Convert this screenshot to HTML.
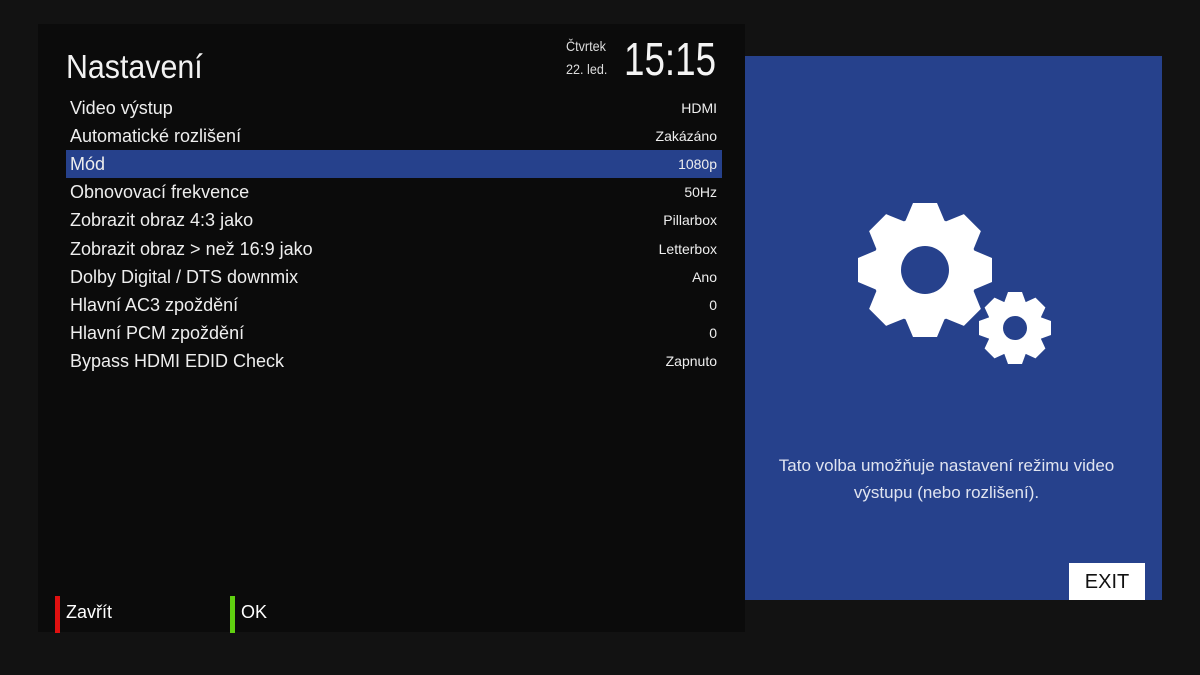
<!DOCTYPE html>
<html><head><meta charset="utf-8"><style>
body{margin:0;width:1200px;height:675px;background:#121212;position:relative;overflow:hidden;font-family:"Liberation Sans",sans-serif;color:#fff}
.panel{position:absolute;left:38px;top:24px;width:707px;height:608px;background:#0b0b0b}
.title{position:absolute;left:66px;top:48px;font-size:33px;transform:scaleX(0.92);transform-origin:0 0;color:#f2f2f2}
.day{position:absolute;left:566px;top:38px;font-size:14px;color:#ddd;transform:scaleX(0.9);transform-origin:0 0}
.date{position:absolute;left:566px;top:61px;font-size:14px;color:#ddd;transform:scaleX(0.9);transform-origin:0 0}
.time{position:absolute;left:624px;top:32px;font-size:46px;transform:scaleX(0.8);transform-origin:0 0;color:#f4f4f4}
.row{position:absolute;left:66px;width:656px;height:28px;line-height:28px;font-size:18px;color:#eee}
.row span{position:absolute;left:4px}
.row b{position:absolute;right:5px;font-weight:normal;font-size:14px}
.sel{background:#26418c}
.blue{position:absolute;left:745px;top:56px;width:417px;height:544px;background:#26418c}
.desc{position:absolute;left:753px;top:452px;width:387px;text-align:center;font-size:17px;line-height:27px;color:#e0e4f0}
.exit{position:absolute;left:1069px;top:563px;width:76px;height:37px;background:#fff;color:#111;font-size:20px;text-align:center;line-height:38px}
.key{position:absolute;top:596px;width:5px;height:37px}
.kl{position:absolute;top:602px;font-size:18px}
</style></head><body>
<div class="panel"></div>
<div class="title">Nastavení</div>
<div class="day">Čtvrtek</div><div class="date">22. led.</div>
<div class="time">15:15</div>
<div class="row" style="top:94px"><span>Video výstup</span><b>HDMI</b></div>
<div class="row" style="top:122px"><span>Automatické rozlišení</span><b>Zakázáno</b></div>
<div class="row sel" style="top:150px"><span>Mód</span><b>1080p</b></div>
<div class="row" style="top:178px"><span>Obnovovací frekvence</span><b>50Hz</b></div>
<div class="row" style="top:206px"><span>Zobrazit obraz 4:3 jako</span><b>Pillarbox</b></div>
<div class="row" style="top:235px"><span>Zobrazit obraz &gt; než 16:9 jako</span><b>Letterbox</b></div>
<div class="row" style="top:263px"><span>Dolby Digital / DTS downmix</span><b>Ano</b></div>
<div class="row" style="top:291px"><span>Hlavní AC3 zpoždění</span><b>0</b></div>
<div class="row" style="top:319px"><span>Hlavní PCM zpoždění</span><b>0</b></div>
<div class="row" style="top:347px"><span>Bypass HDMI EDID Check</span><b>Zapnuto</b></div>
<div class="blue"></div>
<svg style="position:absolute;left:745px;top:56px" width="417" height="544">
<g transform="translate(180,214)" fill="#fff">
<circle r="53"/>
<g id="t"><polygon points="-20,-48 -12,-67 12,-67 20,-48"/></g>
<use href="#t" transform="rotate(45)"/><use href="#t" transform="rotate(90)"/><use href="#t" transform="rotate(135)"/>
<use href="#t" transform="rotate(180)"/><use href="#t" transform="rotate(225)"/><use href="#t" transform="rotate(270)"/><use href="#t" transform="rotate(315)"/>
<circle r="24" fill="#26418c"/>
</g>
<g transform="translate(270,272)" fill="#fff">
<circle r="28"/>
<g id="s"><polygon points="-11,-25 -7,-36 7,-36 11,-25"/></g>
<use href="#s" transform="rotate(45)"/><use href="#s" transform="rotate(90)"/><use href="#s" transform="rotate(135)"/>
<use href="#s" transform="rotate(180)"/><use href="#s" transform="rotate(225)"/><use href="#s" transform="rotate(270)"/><use href="#s" transform="rotate(315)"/>
<circle r="12" fill="#26418c"/>
</g>
</svg>
<div class="desc">Tato volba umožňuje nastavení režimu video výstupu (nebo rozlišení).</div>
<div class="exit">EXIT</div>
<div class="key" style="left:55px;background:#e01010"></div><div class="kl" style="left:66px">Zavřít</div>
<div class="key" style="left:230px;background:#60d010"></div><div class="kl" style="left:241px">OK</div>
</body></html>
